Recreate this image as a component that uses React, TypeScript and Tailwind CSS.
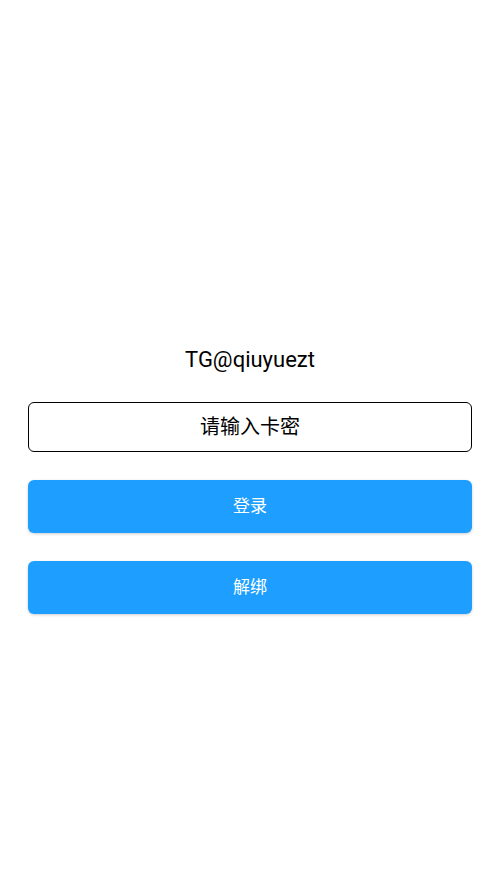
export default function App() {
  return (
    <div className="min-h-[888px] bg-white flex flex-col items-stretch px-[28px] pt-[345px]" style={{ fontFamily: 'Roboto, "Noto Sans CJK SC", sans-serif' }}>
      <div className="h-[30px] flex items-center justify-center text-[22px] text-black leading-none">TG@qiuyuezt</div>
      <input
        className="mt-[27px] h-[50px] w-full border border-black rounded-[6px] text-center text-[20px] text-black placeholder:text-black outline-none"
        placeholder="请输入卡密"
        style={{ fontFamily: 'Roboto, "Noto Sans CJK SC", sans-serif' }}
      />
      <button className="mt-[28px] h-[53px] w-full rounded-[6px] bg-[#1e9fff] text-white text-[17px] shadow-[0_1px_3px_rgba(0,0,0,0.2)]">登录</button>
      <button className="mt-[28px] h-[53px] w-full rounded-[6px] bg-[#1e9fff] text-white text-[17px] shadow-[0_1px_3px_rgba(0,0,0,0.2)]">解绑</button>
    </div>
  );
}
